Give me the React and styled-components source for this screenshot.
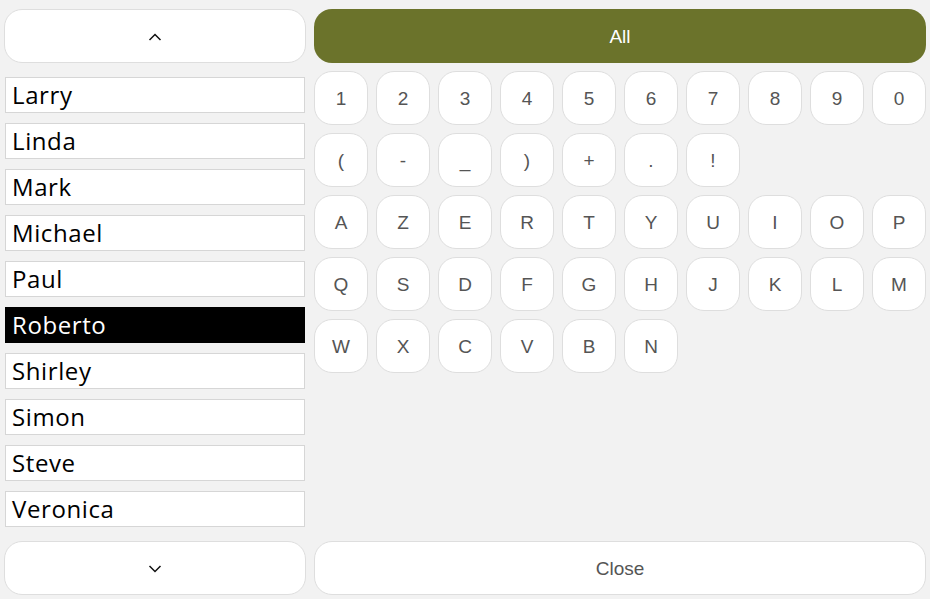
import styled, { createGlobalStyle } from "styled-components";

const names = [
  "Larry",
  "Linda",
  "Mark",
  "Michael",
  "Paul",
  "Roberto",
  "Shirley",
  "Simon",
  "Steve",
  "Veronica",
];

const keyRows = [
  ["1", "2", "3", "4", "5", "6", "7", "8", "9", "0"],
  ["(", "-", "_", ")", "+", ".", "!"],
  ["A", "Z", "E", "R", "T", "Y", "U", "I", "O", "P"],
  ["Q", "S", "D", "F", "G", "H", "J", "K", "L", "M"],
  ["W", "X", "C", "V", "B", "N"],
];

const GlobalStyles = createGlobalStyle`
  html, body {
    margin: 0;
    padding: 0;
    background: #f2f2f2;
  }
  * { box-sizing: border-box; }
`;

function Chevron({ up }) {
  return (
    <svg width="14" height="8" viewBox="0 0 14 8" fill="none">
      <path
        d={up ? "M1.5 7 L7 1.5 L12.5 7" : "M1.5 1 L7 6.5 L12.5 1"}
        stroke="#111"
        strokeWidth="1.5"
      />
    </svg>
  );
}

function App() {
  return (
    <>
      <GlobalStyles />
      <Page>
        <SideColumn>
          <RoundButton>
            <Chevron up />
          </RoundButton>
          <NameList>
            {names.map((n) => (
              <NameItem key={n} $selected={n === "Roberto"}>
                {n}
              </NameItem>
            ))}
          </NameList>
          <RoundButton>
            <Chevron />
          </RoundButton>
        </SideColumn>
        <MainColumn>
          <AllButton>All</AllButton>
          <KeyGrid>
            {keyRows.map((row, i) =>
              row
                .concat(Array(10 - row.length).fill(null))
                .map((k, j) =>
                  k === null ? (
                    <Spacer key={`${i}-${j}`} />
                  ) : (
                    <Key key={`${i}-${j}`}>{k}</Key>
                  )
                )
            )}
          </KeyGrid>
          <RoundButton $text>Close</RoundButton>
        </MainColumn>
      </Page>
    </>
  );
}

const Page = styled.div`
  display: grid;
  grid-template-columns: 302px 1fr;
  gap: 8px;
  height: 100vh;
  padding: 9px 4px 4px 4px;
  font-family: "Liberation Sans", Arial, sans-serif;
`;

const SideColumn = styled.div`
  display: flex;
  flex-direction: column;
  justify-content: space-between;
`;

const MainColumn = styled.div`
  display: flex;
  flex-direction: column;
  justify-content: space-between;
`;

const RoundButton = styled.button`
  display: flex;
  align-items: center;
  justify-content: center;
  height: 54px;
  width: 100%;
  background: #ffffff;
  border: 1px solid #dedede;
  border-radius: 18px;
  font-family: "Liberation Sans", Arial, sans-serif;
  font-size: 19px;
  color: #555555;
  padding: 2px 0 0 0;
`;

const NameList = styled.div`
  display: flex;
  flex-direction: column;
  gap: 10px;
  padding: 0 1px;
`;

const NameItem = styled.div`
  height: 36px;
  display: flex;
  align-items: center;
  padding: 0 6px;
  background: ${(p) => (p.$selected ? "#000" : "#fff")};
  color: ${(p) => (p.$selected ? "#fff" : "#000")};
  border: 1px solid ${(p) => (p.$selected ? "#000" : "#d6d6d6")};
  font-family: "Open Sans", "Noto Sans", sans-serif;
  font-size: 24px;
  letter-spacing: 0.6px;
  line-height: 1;
`;

const AllButton = styled.button`
  height: 54px;
  width: 100%;
  background: #6b732b;
  border: none;
  border-radius: 18px;
  color: #ffffff;
  font-family: "Liberation Sans", Arial, sans-serif;
  font-size: 19px;
  padding: 2px 0 0 0;
`;

const KeyGrid = styled.div`
  display: grid;
  grid-template-columns: repeat(10, 54px);
  grid-auto-rows: 54px;
  gap: 8px;
  margin-top: 8px;
  flex: 1;
  align-content: start;
`;

const Key = styled.button`
  background: #ffffff;
  border: 1px solid #dedede;
  border-radius: 18px;
  color: #555555;
  font-family: "Liberation Sans", Arial, sans-serif;
  font-size: 19px;
  padding: 2px 0 0 0;
`;

const Spacer = styled.div``;

export default App;
